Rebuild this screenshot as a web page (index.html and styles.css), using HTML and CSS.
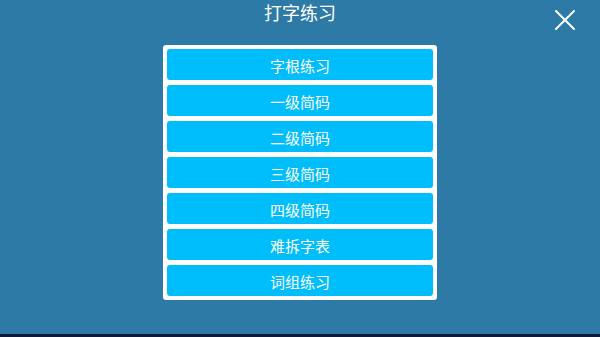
FILE: index.html
```html
<!DOCTYPE html>
<html lang="zh">
<head>
<meta charset="utf-8">
<title>打字练习</title>
<link rel="stylesheet" href="styles.css">
</head>
<body>
<div class="screen">
  <header class="header">
    <h1 class="title">打字练习</h1>
    <button class="close" aria-label="关闭">
      <svg width="20" height="20" viewBox="0 0 20 20"><path d="M1 1 L19 19 M19 1 L1 19" stroke="#fff" stroke-width="2" stroke-linecap="square" fill="none"/></svg>
    </button>
  </header>
  <main class="main">
    <div class="panel">
      <button class="item">字根练习</button>
      <button class="item">一级简码</button>
      <button class="item">二级简码</button>
      <button class="item">三级简码</button>
      <button class="item">四级简码</button>
      <button class="item">难拆字表</button>
      <button class="item">词组练习</button>
    </div>
  </main>
  <div class="navbar"></div>
</div>
</body>
</html>
```
FILE: styles.css
```css
html, body {
  margin: 0;
  padding: 0;
}
body {
  background: #2e7aa6;
  font-family: "Noto Sans CJK SC", "Noto Sans", sans-serif;
}
.screen {
  width: 600px;
  height: 337px;
  display: flex;
  flex-direction: column;
}
.header {
  height: 45px;
  position: relative;
  display: flex;
  justify-content: center;
}
.title {
  margin: 0;
  font-size: 18px;
  line-height: 24px;
  font-weight: normal;
  color: #fff;
}
.close {
  position: absolute;
  top: 10px;
  right: 25px;
  width: 20px;
  height: 20px;
  padding: 0;
  border: 0;
  background: none;
  display: block;
}
.close svg {
  display: block;
}
.main {
  flex: 1;
  display: flex;
  justify-content: center;
  align-items: flex-start;
}
.panel {
  width: 266px;
  padding: 4px;
  background: #fff;
  border-radius: 3px;
  display: flex;
  flex-direction: column;
  gap: 5px;
}
.item {
  height: 31px;
  padding: 2px 0 0;
  border: 0;
  border-radius: 3px;
  background: #00bdfc;
  color: #fff;
  font-family: "Noto Sans CJK SC", "Noto Sans", sans-serif;
  font-size: 15px;
  line-height: 29px;
  text-align: center;
}
.navbar {
  height: 3px;
  background: #0e1a3a;
}
```
